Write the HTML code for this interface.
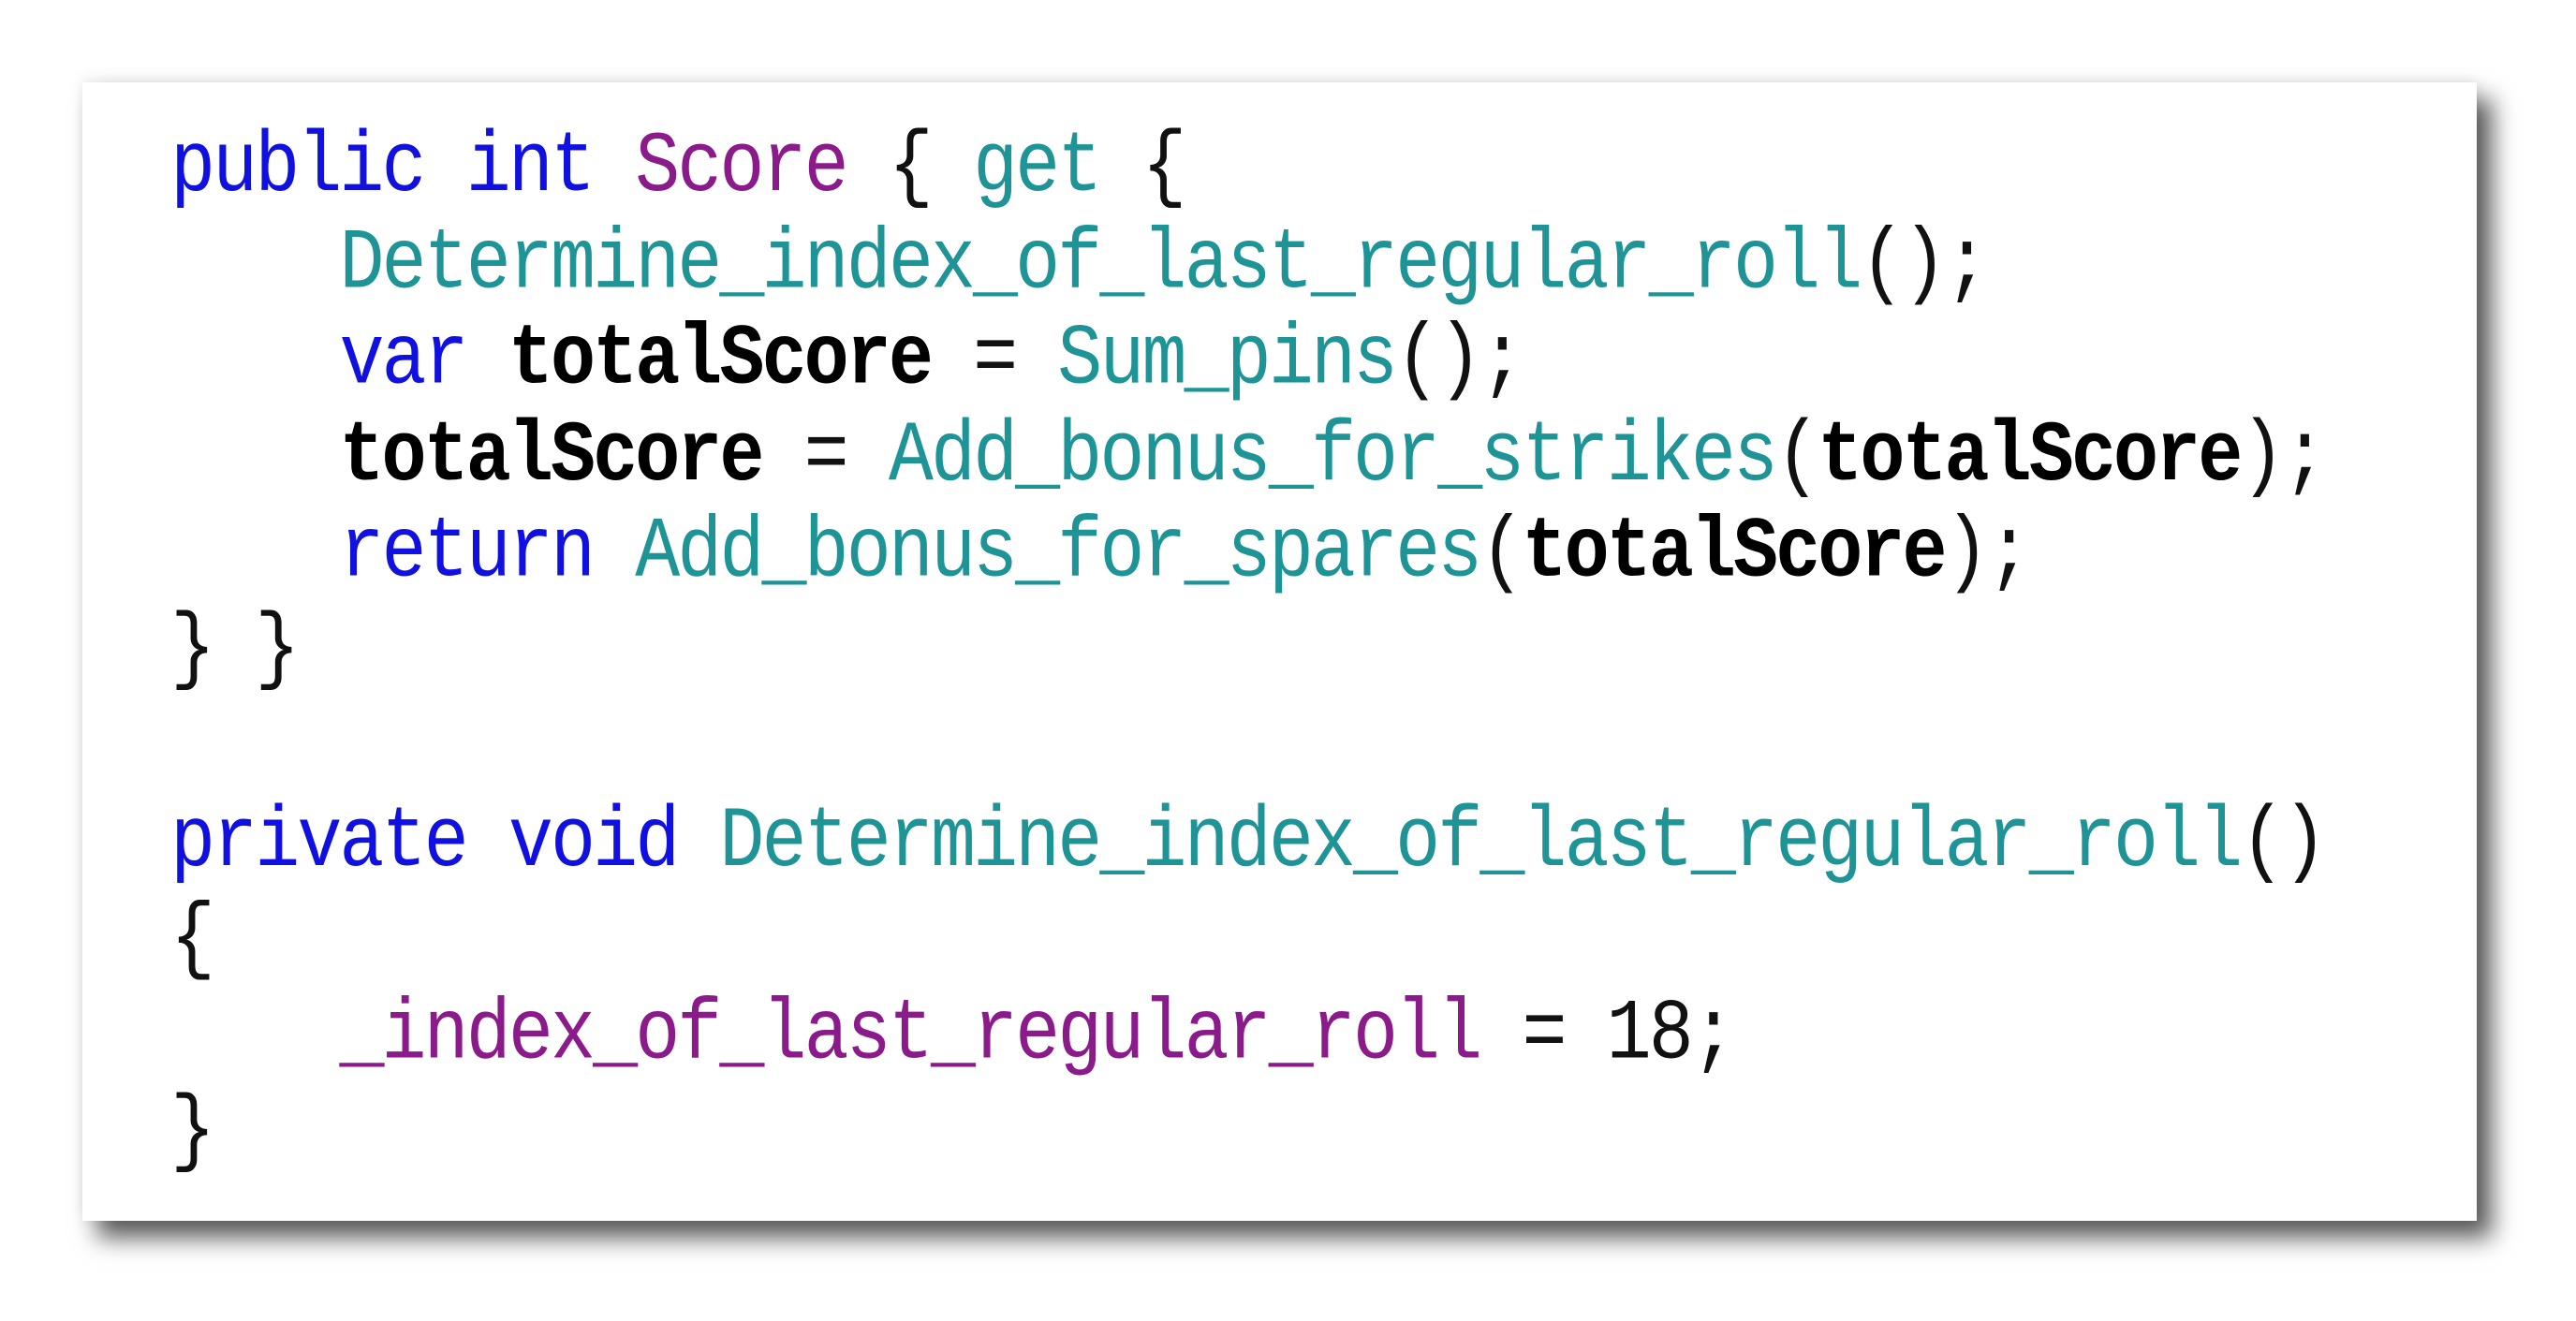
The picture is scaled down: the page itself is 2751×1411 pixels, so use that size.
<!DOCTYPE html>
<html><head><meta charset="utf-8"><style>
html,body{margin:0;padding:0;background:#fff;width:2751px;height:1411px;overflow:hidden}
.card{position:absolute;left:88px;top:88px;width:2557px;height:1216px;background:#fff;box-shadow:16px 18px 24px rgba(0,0,0,0.65),0 -4px 14px rgba(0,0,0,0.08)}
pre{position:absolute;left:94px;top:40px;margin:0;font-family:"Liberation Mono",monospace;font-size:80px;letter-spacing:-2.9px;line-height:89.6px;color:#111;transform:scaleY(1.15);transform-origin:top left}
.k{color:#1010e0}.p{color:#8b1a8b}.m{color:#1e9496}.b{font-weight:bold;color:#000}
</style></head><body>
<div class="card"><pre><span class="k">public</span> <span class="k">int</span> <span class="p">Score</span> { <span class="m">get</span> {
    <span class="m">Determine_index_of_last_regular_roll</span>();
    <span class="k">var</span> <span class="b">totalScore</span> = <span class="m">Sum_pins</span>();
    <span class="b">totalScore</span> = <span class="m">Add_bonus_for_strikes</span>(<span class="b">totalScore</span>);
    <span class="k">return</span> <span class="m">Add_bonus_for_spares</span>(<span class="b">totalScore</span>);
} }

<span class="k">private</span> <span class="k">void</span> <span class="m">Determine_index_of_last_regular_roll</span>()
{
    <span class="p">_index_of_last_regular_roll</span> = 18;
}</pre></div>
</body></html>
